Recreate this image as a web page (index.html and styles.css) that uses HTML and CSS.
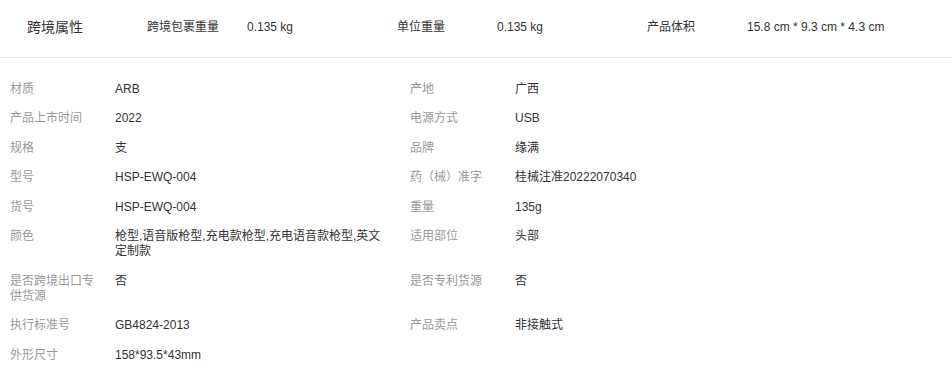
FILE: index.html
```html
<!DOCTYPE html>
<html lang="zh-CN">
<head>
<meta charset="utf-8">
<title>跨境属性</title>
<link rel="stylesheet" href="styles.css">
</head>
<body>
<div class="header">
  <div class="title">跨境属性</div>
  <div class="group"><span class="hlabel">跨境包裹重量</span><span class="hvalue">0.135 kg</span></div>
  <div class="group"><span class="hlabel">单位重量</span><span class="hvalue">0.135 kg</span></div>
  <div class="group"><span class="hlabel">产品体积</span><span class="hvalue">15.8 cm * 9.3 cm * 4.3 cm</span></div>
</div>
<div class="attrs">
  <div class="label">材质</div><div class="value">ARB</div>
  <div class="label">产地</div><div class="value">广西</div>

  <div class="label">产品上市时间</div><div class="value">2022</div>
  <div class="label">电源方式</div><div class="value">USB</div>

  <div class="label">规格</div><div class="value">支</div>
  <div class="label">品牌</div><div class="value">缘满</div>

  <div class="label">型号</div><div class="value">HSP-EWQ-004</div>
  <div class="label">药（械）准字</div><div class="value">桂械注准20222070340</div>

  <div class="label">货号</div><div class="value">HSP-EWQ-004</div>
  <div class="label">重量</div><div class="value">135g</div>

  <div class="label">颜色</div><div class="value">枪型,语音版枪型,充电款枪型,充电语音款枪型,英文定制款</div>
  <div class="label">适用部位</div><div class="value">头部</div>

  <div class="label">是否跨境出口专供货源</div><div class="value">否</div>
  <div class="label">是否专利货源</div><div class="value">否</div>

  <div class="label">执行标准号</div><div class="value">GB4824-2013</div>
  <div class="label">产品卖点</div><div class="value">非接触式</div>

  <div class="label">外形尺寸</div><div class="value">158*93.5*43mm</div>
  <div class="label"></div><div class="value"></div>
</div>
</body>
</html>
```

FILE: styles.css
```css
html, body {
  margin: 0;
  padding: 0;
  background: #fff;
}
body {
  font-family: "Liberation Sans", "Noto Sans CJK SC", Arial, sans-serif;
  font-size: 12px;
  color: #333;
}
.header {
  display: flex;
  align-items: center;
  height: 52px;
  padding: 1px 0 4px 27px;
  border-bottom: 1px solid #e8e8e8;
}
.title {
  width: 120px;
  font-size: 14px;
  line-height: 16px;
  color: #333;
}
.group {
  display: flex;
  width: 250px;
  line-height: 16px;
}
.hlabel {
  width: 100px;
  color: #333;
}
.hvalue {
  color: #333;
}
.attrs {
  display: grid;
  grid-template-columns: 105px 295px 105px 1fr;
  padding: 16.5px 0 0 10px;
  line-height: 15px;
}
.label,
.value {
  padding: 7.25px 15px 7.25px 0;
}
.value {
  padding-right: 25px;
  color: #333;
}
.label {
  color: #999;
}
```
